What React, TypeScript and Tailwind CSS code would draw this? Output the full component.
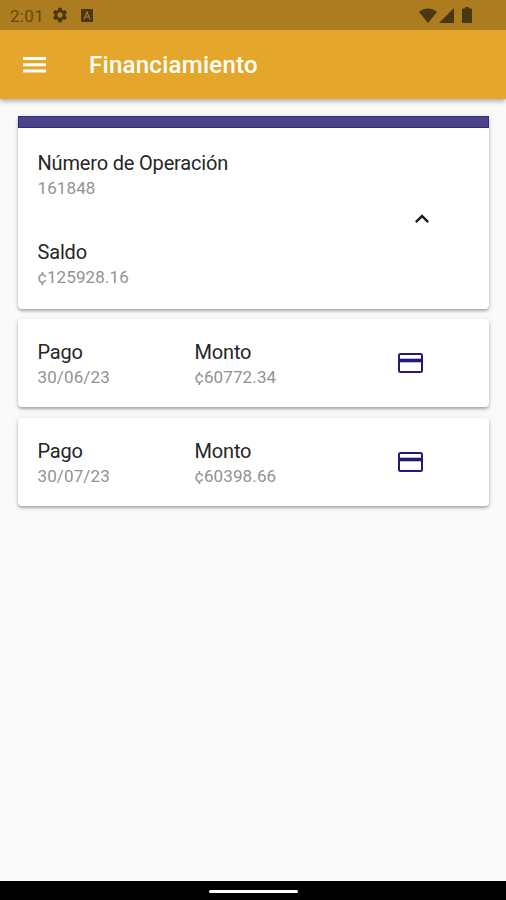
import React from 'react';
import { MdExpandLess, MdSettings } from 'react-icons/md';

interface FieldProps {
  label: string;
  value: string;
}

interface Payment {
  date: string;
  amount: string;
}

const payments: Payment[] = [
  { date: '30/06/23', amount: '¢60772.34' },
  { date: '30/07/23', amount: '¢60398.66' },
];

const Field: React.FC<FieldProps> = ({ label, value }) => (
  <div>
    <div className="text-[20px] leading-[26px] tracking-[-0.17px] text-[#262626]">{label}</div>
    <div className="text-[17px] leading-[25px] tracking-[0.12px] text-[#929292]">{value}</div>
  </div>
);

const StatusBar: React.FC = () => (
  <div className="flex h-[30px] items-center bg-[#ab7d20] pl-[10px] pr-[34px] text-[#493811]">
    <span className="w-[41px] pt-[2px] text-[17px] leading-[28px] tracking-[0.3px] text-[#65490f]">2:01</span>
    <MdSettings className="h-[18px] w-[18px]" />
    <svg viewBox="0 0 12 13" className="ml-[12px] h-[13px] w-[12px]">
      <rect width="12" height="13" rx="1" fill="currentColor" />
      <path d="M3 10.5 6 3l3 7.500M4.200 8h3.600" fill="none" stroke="#ab7d20" strokeWidth="1.200" />
    </svg>
    <div className="ml-auto flex items-center">
      <svg viewBox="0 0 18 15" className="h-[15px] w-[18px]">
        <path d="M0 4C5-.7 13-.7 18 4L9 15z" fill="currentColor" />
      </svg>
      <svg viewBox="0 0 15 15" className="ml-[2px] h-[15px] w-[15px]">
        <path d="M15 0v15H0z" fill="currentColor" />
      </svg>
      <svg viewBox="0 0 10 16" className="ml-[8px] h-[16px] w-[10px]">
        <path d="M3 0h4v1.500h2a1 1 0 0 1 1 1V15a1 1 0 0 1-1 1H1a1 1 0 0 1-1-1V2.500a1 1 0 0 1 1-1h2z" fill="currentColor" />
      </svg>
    </div>
  </div>
);

const MenuIcon: React.FC = () => (
  <svg viewBox="0 0 23 16" className="h-[16px] w-[23px]" fill="currentColor">
    <path d="M0 0h23v3H0zM0 6.300h23v3H0zM0 12.600h23v3H0z" />
  </svg>
);

const CardIcon: React.FC = () => (
  <svg viewBox="0 0 25 20" className="ml-[3px] mt-[14px] h-[20px] w-[25px] text-[#231a78]" fill="none">
    <rect x="1" y="1" width="23" height="18" rx="1.500" stroke="currentColor" strokeWidth="2" />
    <path d="M1 7.500h23" stroke="currentColor" strokeWidth="3.600" />
  </svg>
);

const PaymentCard: React.FC<Payment> = ({ date, amount }) => (
  <div className="flex h-[88px] rounded-[4px] bg-white pl-5 pt-[20px] shadow-[0_2px_3px_rgba(0,0,0,0.28),0_1px_6px_rgba(0,0,0,0.1)]">
    <div className="w-[157px]">
      <Field label="Pago" value={date} />
    </div>
    <div className="w-[200px]">
      <Field label="Monto" value={amount} />
    </div>
    <CardIcon />
  </div>
);

const App: React.FC = () => {
  return (
    <div className="flex h-[900px] w-[506px] flex-col bg-[#fafafa] font-['Roboto',sans-serif]">
      <header className="shadow-[0_2px_5px_rgba(0,0,0,0.35)]">
        <StatusBar />
        <div className="flex h-[69px] items-center bg-[#e4a72b] pl-[23px] text-white">
          <MenuIcon />
          <h1 className="ml-[43px] pt-[1px] text-[24px] font-medium tracking-[0.27px]">Financiamiento</h1>
        </div>
      </header>

      <main className="flex flex-1 flex-col gap-[10.5px] pl-[17.5px] pr-[17px] pt-[17px]">
        {/* Operation summary */}
        <section className="h-[192.5px] rounded-b-[4px] bg-white shadow-[0_2px_3px_rgba(0,0,0,0.28),0_1px_6px_rgba(0,0,0,0.1)]">
          <div className="h-[12px] border border-[#352c7d] bg-[#4a4389]" />
          <div className="flex items-center pl-5 pt-[22px]">
            <div className="flex w-[370px] flex-col gap-[38px]">
              <Field label="Número de Operación" value="161848" />
              <Field label="Saldo" value="¢125928.16" />
            </div>
            <MdExpandLess className="-mt-[3px] h-[28px] w-[28px] text-[#1c1c1c]" />
          </div>
        </section>

        {payments.map((payment) => (
          <PaymentCard key={payment.date} {...payment} />
        ))}
      </main>

      {/* Gesture bar */}
      <footer className="flex h-[19px] items-center justify-center bg-black pt-[2px]">
        <div className="h-[3px] w-[89px] rounded-full bg-white" />
      </footer>
    </div>
  );
};

export default App;
